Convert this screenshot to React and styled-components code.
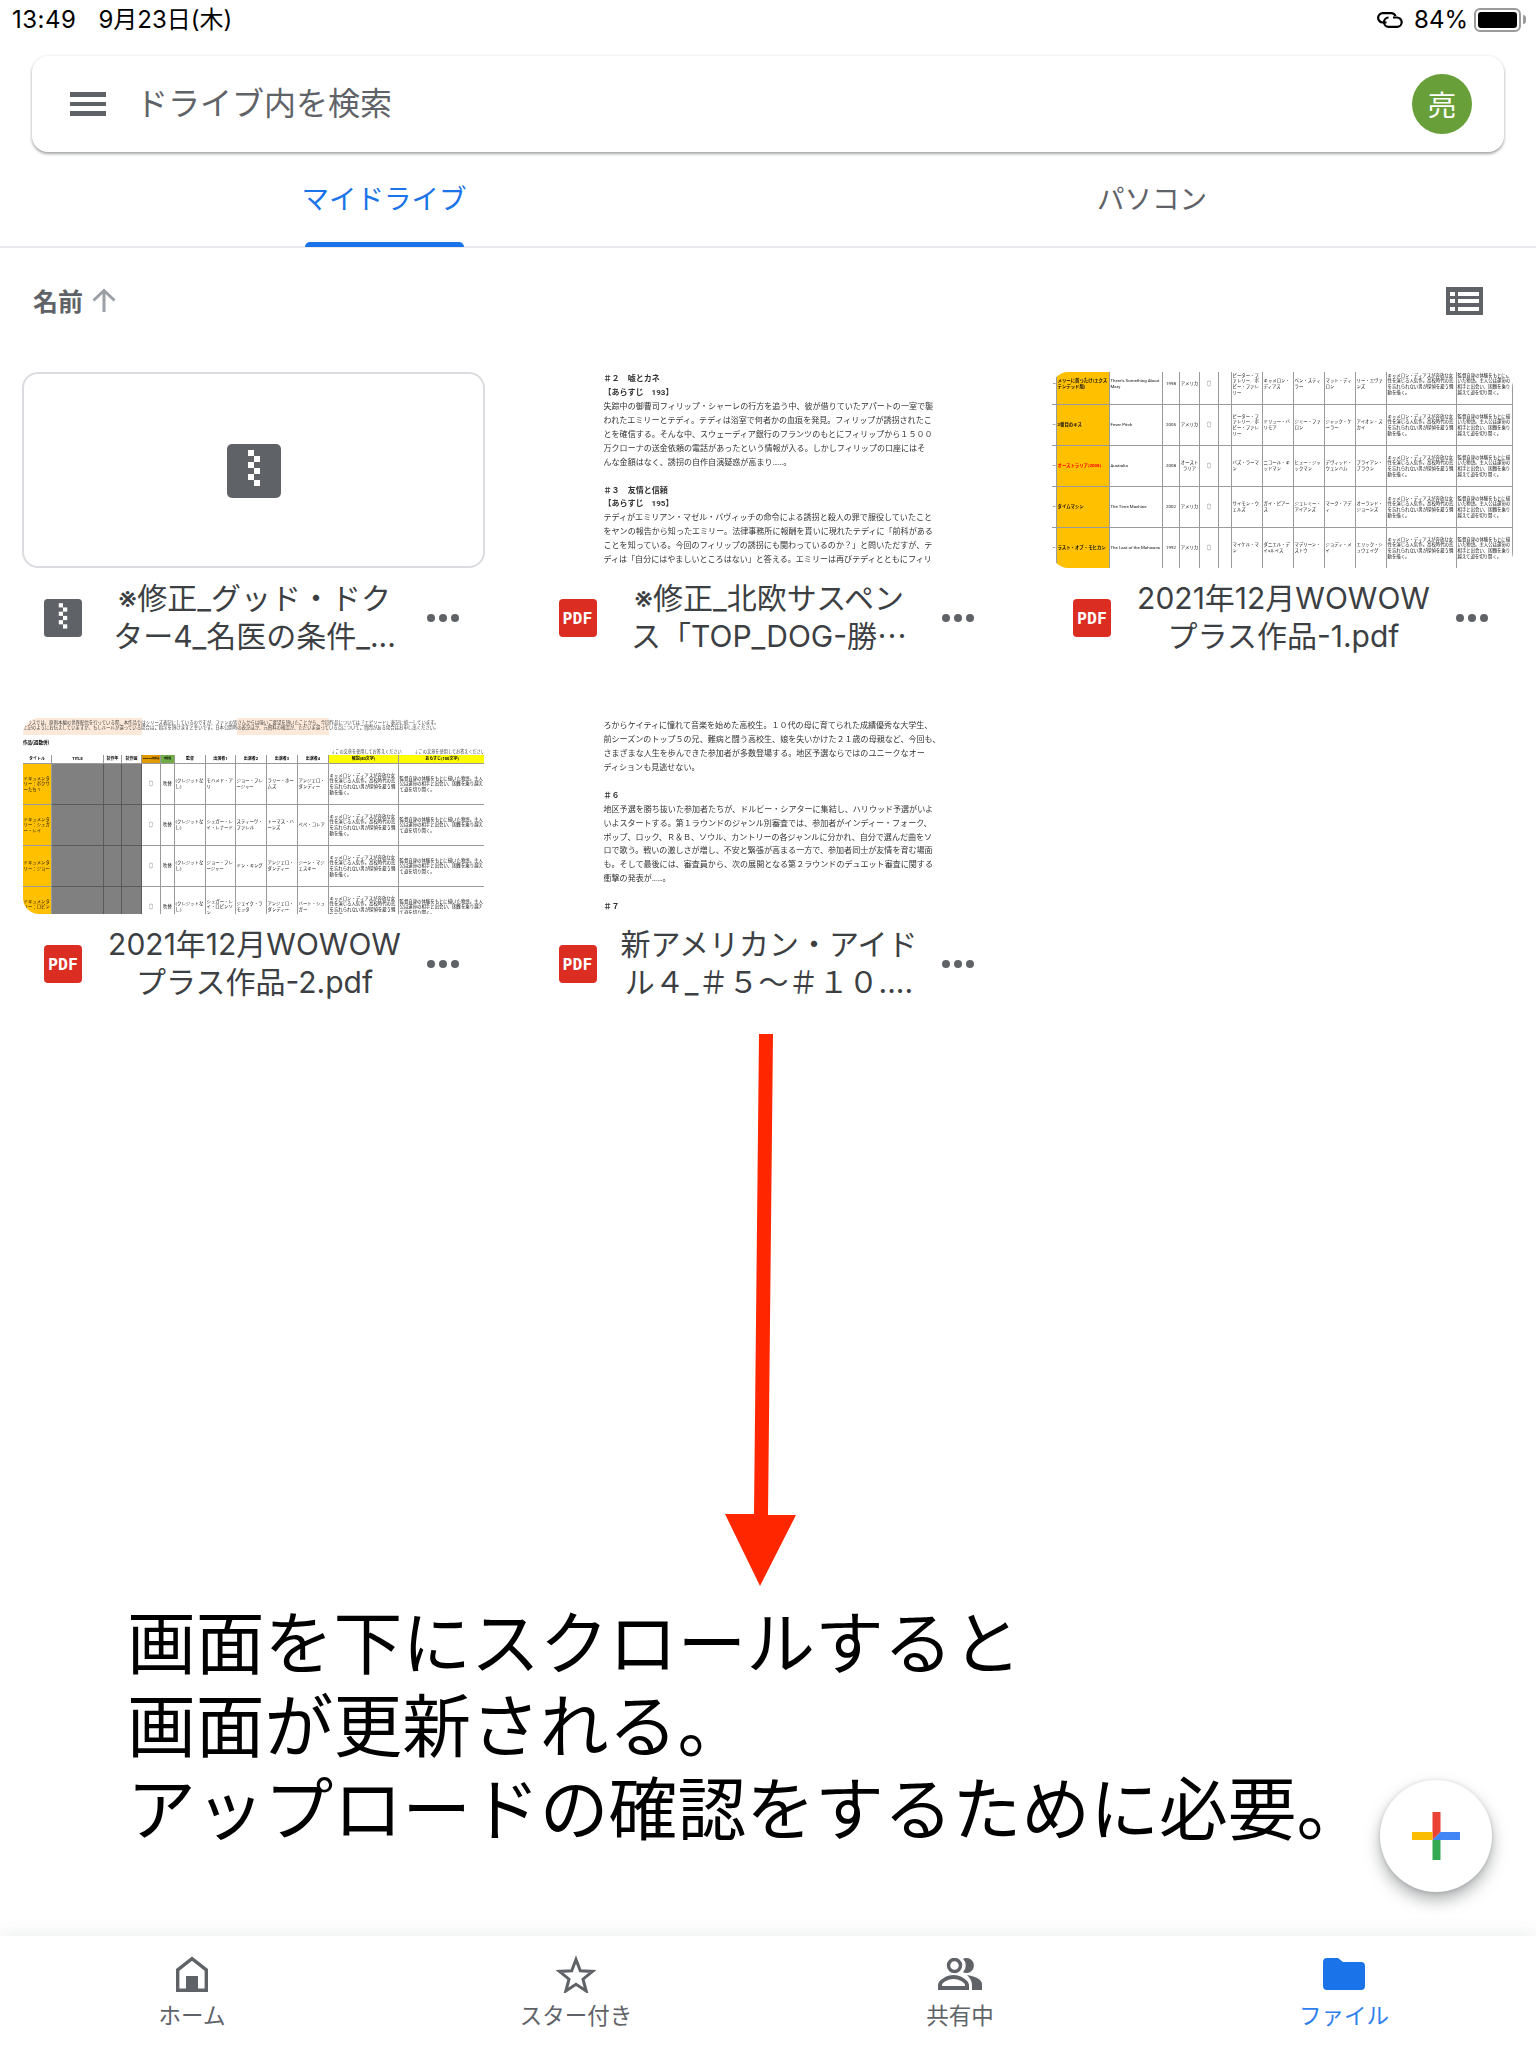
import React from "react";
import styled, { createGlobalStyle } from "styled-components";

const FONT = `Roboto, "Noto Sans CJK JP", sans-serif`;
const GREY = "#5f6368";
const BLUE = "#1a73e8";

const GlobalStyle = createGlobalStyle`
  html, body {
    margin: 0;
    padding: 0;
    background: #fff;
  }
  * {
    box-sizing: border-box;
  }
`;

const Page = styled.div`
  position: relative;
  width: 1536px;
  height: 2048px;
  display: flex;
  flex-direction: column;
  overflow: hidden;
  background: #fff;
  font-family: ${FONT};
`;

/* status bar */
const StatusBar = styled.div`
  height: 40px;
  display: flex;
  align-items: center;
  justify-content: space-between;
  padding: 0 15px 0 12px;
  font-family: Inter, "Noto Sans CJK JP", sans-serif;
  font-size: 24px;
  line-height: 28px;
  color: #000;
`;

const StatusLeft = styled.div`
  display: flex;
  align-items: baseline;
  gap: 22px;
`;

const StatusTime = styled.span`
  letter-spacing: 0.5px;
`;

const StatusRight = styled.div`
  display: flex;
  align-items: center;
`;

const BatteryLevel = styled.span`
  margin: 0 6px 0 11px;
`;

const Battery = styled.div`
  position: relative;
  width: 47px;
  height: 24px;
  border: 2px solid #9b9b9b;
  border-radius: 6px;
  padding: 2px;

  &::before {
    content: "";
    display: block;
    width: 39px;
    height: 16px;
    background: #000;
    border-radius: 3px;
  }

  &::after {
    content: "";
    position: absolute;
    right: -7px;
    top: 5px;
    width: 3px;
    height: 9px;
    background: #9b9b9b;
    border-radius: 0 3px 3px 0;
  }
`;

/* search */
const SearchBar = styled.div`
  height: 96px;
  margin: 16px 32px 0 32px;
  padding: 0 32px 0 38px;
  display: flex;
  align-items: center;
  background: #fff;
  border-radius: 16px;
  box-shadow: 0 2px 3px rgba(60, 64, 67, 0.45), 0 0 3px rgba(60, 64, 67, 0.1);
`;

const Hamburger = styled.div`
  width: 36px;
  height: 24px;
  border-top: 5px solid ${GREY};
  border-bottom: 5px solid ${GREY};
  position: relative;

  &::after {
    content: "";
    position: absolute;
    left: 0;
    right: 0;
    top: 5px;
    height: 4px;
    background: ${GREY};
  }
`;

const SearchText = styled.div`
  flex: 1;
  margin-left: 30px;
  padding-bottom: 7px;
  font-size: 32px;
  color: ${GREY};
`;

const Avatar = styled.div`
  width: 60px;
  height: 60px;
  border-radius: 50%;
  background: #689f38;
  color: #fff;
  font-size: 28px;
  display: flex;
  align-items: center;
  justify-content: center;
`;

/* tabs */
const Tabs = styled.div`
  height: 96px;
  display: flex;
  border-bottom: 2px solid #e8eaed;
`;

const Tab = styled.div`
  position: relative;
  flex: 1;
  display: flex;
  align-items: center;
  justify-content: center;
  padding-bottom: 5px;
  font-size: 27.5px;
  color: ${({ $active }) => ($active ? BLUE : GREY)};

  ${({ $active }) =>
    $active &&
    `
    &::after {
      content: "";
      position: absolute;
      left: 305px;
      width: 159px;
      bottom: -1px;
      height: 5px;
      background: ${BLUE};
      border-radius: 5px 5px 0 0;
    }
  `}
`;

/* sort row */
const SortRow = styled.div`
  height: 106px;
  flex-shrink: 0;
  padding: 0 53px 0 33px;
  display: flex;
  align-items: center;
  justify-content: space-between;
`;

const SortLabel = styled.div`
  display: flex;
  align-items: center;
  gap: 9px;
  padding-bottom: 2px;
  font-size: 25px;
  font-weight: 700;
  color: ${GREY};
`;

/* file grid */
const FileGrid = styled.div`
  margin-top: 18px;
  padding-left: 23px;
  display: grid;
  grid-template-columns: repeat(3, 461px);
  column-gap: 53.5px;
  row-gap: 62px;
`;

const Card = styled.div`
  display: flex;
  flex-direction: column;
`;

const Thumb = styled.div`
  height: 196px;
  border-radius: 16px;
  overflow: hidden;
  background: #fff;
`;

const ZipThumb = styled(Thumb)`
  margin: 0 -1px;
  padding-top: 1px;
  border: 2px solid #dadce0;
  display: flex;
  align-items: center;
  justify-content: center;
`;

const DocPage = styled(Thumb)`
  padding: ${({ $top }) => $top}px 0 0 66px;
  font-size: 8.05px;
  line-height: 13.95px;
  color: #333;
  filter: blur(0.65px);
  white-space: nowrap;
`;

const DocLine = styled.div`
  width: 340px;
  height: 13.95px;
  font-weight: ${({ $head }) => ($head ? 700 : 400)};
`;

const SheetWrap = styled(Thumb)`
  filter: blur(0.45px);
  font-size: 4.4px;
  line-height: 5.6px;
  color: #111;
`;

const Notes = styled.div`
  height: 17px;
  padding-top: 2px;
  font-size: 4.4px;
  line-height: 5.4px;
  color: #444;
  white-space: nowrap;
  background: linear-gradient(
    to right,
    #fde9d9 0 119px,
    transparent 119px 214px,
    #fde9d9 214px 306px,
    transparent 306px
  );
`;

const SheetHeading = styled.div`
  height: 14px;
  padding-top: 5px;
  font-size: 4.6px;
  font-weight: 700;
  color: #000;
`;

const SheetHint = styled.div`
  height: 6px;
  padding-left: 308px;
  font-size: 4.2px;
  line-height: 6px;
  color: #444;
  white-space: nowrap;
`;

const SheetGrid = styled.div`
  display: grid;
  grid-template-columns: ${({ $cols }) => $cols};
  grid-template-rows: ${({ $head }) => ($head ? `${$head}px` : "none")};
  grid-auto-rows: 41px;
  margin-top: ${({ $shift }) => $shift || 0}px;
`;

const SheetCell = styled.div`
  display: flex;
  align-items: center;
  justify-content: ${({ $center }) => ($center ? "center" : "flex-start")};
  text-align: ${({ $center }) => ($center ? "center" : "left")};
  padding: 0 0.5px;
  overflow: hidden;
  border-right: 1.5px solid ${({ $line }) => $line || "#9a9a9a"};
  border-bottom: 1.5px solid ${({ $line }) => $line || "#9a9a9a"};
  background: ${({ $bg }) => $bg || "transparent"};
  color: ${({ $color }) => $color || "#111"};
  font-weight: ${({ $bold }) => ($bold ? 700 : 400)};
  font-size: ${({ $size }) => ($size ? `${$size}px` : "inherit")};
`;

const CardRow = styled.div`
  margin-top: 12px;
  height: 76px;
  display: flex;
  align-items: center;
  padding-left: 21px;
`;

const FileName = styled.div`
  width: 345px;
  padding-bottom: 2px;
  font-family: Inter, "Noto Sans CJK JP", sans-serif;
  font-size: 30px;
  line-height: 38px;
  color: #3c4043;
  text-align: center;
  white-space: nowrap;
`;

const PdfIcon = styled.div`
  width: 38px;
  height: 38px;
  flex-shrink: 0;
  border-radius: 4px;
  background: #dc2d22;
  color: #fff;
  font-family: "DejaVu Sans Mono", monospace;
  font-size: 16.5px;
  font-weight: 700;
  display: flex;
  align-items: center;
  justify-content: center;
`;

const Dots = styled.div`
  display: flex;
  gap: 4px;

  span {
    width: 8px;
    height: 8px;
    border-radius: 50%;
    background: ${GREY};
  }
`;

/* annotation over the page */
const Arrow = styled.svg`
  position: absolute;
  left: 720px;
  top: 1030px;
`;

const Annotation = styled.div`
  position: absolute;
  left: 127px;
  top: 1604px;
  font-size: 68.8px;
  line-height: 83px;
  color: #000;
  white-space: nowrap;
`;

const Fab = styled.div`
  position: absolute;
  left: 1380px;
  top: 1780px;
  width: 112px;
  height: 112px;
  border-radius: 50%;
  background: #fff;
  display: flex;
  align-items: center;
  justify-content: center;
  box-shadow: 0 8px 16px rgba(60, 64, 67, 0.4), 0 1px 4px rgba(60, 64, 67, 0.2);
`;

/* bottom nav */
const BottomNav = styled.div`
  margin-top: auto;
  height: 112px;
  display: grid;
  grid-template-columns: repeat(4, 1fr);
  background: #fff;
  box-shadow: 0 -6px 14px rgba(60, 64, 67, 0.07);
  position: relative;
`;

const NavItem = styled.div`
  display: flex;
  flex-direction: column;
  align-items: center;
  padding-top: 18px;
  font-size: 22.5px;
  color: ${({ $active }) => ($active ? "#2f80ed" : GREY)};
`;

const NavIcon = styled.div`
  height: 40px;
  display: flex;
  align-items: center;
  justify-content: center;
`;

const NavLabel = styled.div`
  margin-top: 7px;
  line-height: 30px;
`;

const ZipIcon = ({ size }) => (
  <svg width={size} height={size} viewBox="0 0 54 54">
    <rect width="54" height="54" rx="5" fill={GREY} />
    {[0, 1, 2, 3, 4, 5].map((i) => (
      <rect key={i} x={i % 2 ? 27 : 21} y={6 + i * 6} width="6" height="6" fill="#fff" />
    ))}
  </svg>
);

const LinkIcon = () => (
  <svg width="26" height="16" viewBox="0 0 26 16" fill="none" stroke="#000" strokeWidth="2.200">
    <path d="M9.500 10.500H5.800a4.700 4.700 0 0 1 0-9.400h8.400a4.700 4.700 0 0 1 4.300 3" />
    <path d="M16 5.500h4a4.700 4.700 0 0 1 0 9.400h-8.400a4.700 4.700 0 0 1-4.600-4.700 4.700 4.700 0 0 1 4.600-4.700" />
  </svg>
);

const SortArrow = () => (
  <svg width="24" height="24" viewBox="0 0 24 24" fill="none" stroke="#9aa0a6" strokeWidth="3">
    <path d="M12 24V2.500M1.500 12.500 12 2.500l10.500 10" />
  </svg>
);

const ListIcon = () => (
  <svg width="37" height="28" viewBox="0 0 37 28">
    <rect width="37" height="28" fill={GREY} />
    <g fill="#fff">
      <rect x="4" y="5" width="5" height="4" />
      <rect x="4" y="12" width="5" height="4" />
      <rect x="4" y="20" width="5" height="4" />
      <rect x="12" y="5" width="21" height="4" />
      <rect x="12" y="12" width="21" height="4" />
      <rect x="12" y="20" width="21" height="4" />
    </g>
  </svg>
);

const HomeIcon = () => (
  <svg width="32" height="36" viewBox="0 0 32 36">
    <path
      fill="none"
      stroke={GREY}
      strokeWidth="3.400"
      d="M1.700 34.300V13.800L16 2.600l14.300 11.200v20.500z"
    />
    <rect x="10" y="20" width="12" height="14" fill={GREY} />
  </svg>
);

const StarIcon = () => (
  <svg width="40" height="38" viewBox="0 0 40 38">
    <path
      fill="none"
      stroke={GREY}
      strokeWidth="3"
      d="M20 4.500l4.300 11.300 12.200.6-9.500 7.800 3.200 11.800L20 29.300 9.800 36l3.200-11.800-9.500-7.800 12.200-.6z"
    />
  </svg>
);

const SharedIcon = () => (
  <svg width="44" height="32" viewBox="0 0 44 32">
    <circle cx="16.500" cy="7.500" r="6" fill="none" stroke={GREY} strokeWidth="3.500" />
    <path d="M25 .8A7.500 7.500 0 1 1 25 14.200 9.500 9.500 0 0 0 25 .8z" fill={GREY} />
    <path
      fillRule="evenodd"
      fill={GREY}
      d="M0 32v-5c0-5 9-10 15.500-10S31 22 31 27v5zM4 28h23v-1c0-2.500-6.500-6-11.500-6S4 24.500 4 27z"
    />
    <path d="M29 17c7 1 15 4 15 9v6H34v-5c0-4-2-7-5-10z" fill={GREY} />
  </svg>
);

const FolderIcon = () => (
  <svg width="42" height="32" viewBox="0 0 42 32">
    <path
      fill={BLUE}
      d="M4 0h11l5 4h18a4 4 0 0 1 4 4v20a4 4 0 0 1-4 4H4a4 4 0 0 1-4-4V4a4 4 0 0 1 4-4z"
    />
  </svg>
);

const PlusIcon = () => (
  <svg width="48" height="48" viewBox="0 0 48 48">
    <polygon fill="#ea4335" points="20.500,0 28.500,0 28.500,20 20.500,28" />
    <polygon fill="#4285f4" points="28.500,20 48,20 48,28 20.500,28" />
    <polygon fill="#fbbc04" points="0,20 20.500,20 20.500,28 0,28" />
    <polygon fill="#34a853" points="20.500,28 28.500,28 28.500,48 20.500,48" />
  </svg>
);

const DOC_ONE = [
  "＃２　嘘とカネ",
  "【あらすじ　193】",
  "失踪中の御曹司フィリップ・シャーレの行方を追う中、彼が借りていたアパートの一室で襲",
  "われたエミリーとテディ。テディは浴室で何者かの血痕を発見。フィリップが誘拐されたこ",
  "とを確信する。そんな中、スウェーディア銀行のフランツのもとにフィリップから１５００",
  "万クローナの送金依頼の電話があったという情報が入る。しかしフィリップの口座にはそ",
  "んな金額はなく、誘拐の自作自演疑惑が高まり……。",
  "",
  "＃３　友情と信頼",
  "【あらすじ　195】",
  "テディがエミリアン・マゼル・バヴィッチの命令による誘拐と殺人の罪で服役していたこと",
  "をヤンの報告から知ったエミリー。法律事務所に報酬を貰いに現れたテディに「前科がある",
  "ことを知っている。今回のフィリップの誘拐にも関わっているのか？」と問いただすが、テ",
  "ディは「自分にはやましいところはない」と答える。エミリーは再びテディとともにフィリ",
];

const DOC_TWO = [
  "ろからケイティに憧れて音楽を始めた高校生。１０代の母に育てられた成績優秀な大学生、",
  "前シーズンのトップ５の兄、難病と闘う高校生、娘を失いかけた２１歳の母親など、今回も、",
  "さまざまな人生を歩んできた参加者が多数登場する。地区予選ならではのユニークなオー",
  "ディションも見逃せない。",
  "",
  "＃６",
  "地区予選を勝ち抜いた参加者たちが、ドルビー・シアターに集結し、ハリウッド予選がいよ",
  "いよスタートする。第１ラウンドのジャンル別審査では、参加者がインディー・フォーク、",
  "ポップ、ロック、Ｒ＆Ｂ、ソウル、カントリーの各ジャンルに分かれ、自分で選んだ曲をソ",
  "ロで歌う。戦いの激しさが増し、不安と緊張が高まる一方で、参加者同士が友情を育む場面",
  "も。そして最後には、審査員から、次の展開となる第２ラウンドのデュエット審査に関する",
  "衝撃の発表が……。",
  "",
  "＃７",
];

const SYNOPSIS =
  "キャメロン・ディアスが奔放な女性を演じる人気作。高校時代の恋を忘れられない男が探偵を雇う騒動を描く。";
const STORY = "監督自身の体験をもとに描いた物語。主人公は運命の相手と出会い、困難を乗り越えて道を切り開く。";

const SHEET_ONE = [
  ["400", "メリーに首ったけ(エクステンデッド版)", "There's Something About Mary", "1998", "アメリカ", "○", "", "ピーター・ファレリー／ボビー・ファレリー", "キャメロン・ディアス", "ベン・スティラー", "マット・ディロン", "リー・エヴァンズ"],
  ["404", "2番目のキス", "Fever Pitch", "2005", "アメリカ", "○", "", "ピーター・ファレリー／ボビー・ファレリー", "ドリュー・バリモア", "ジミー・ファロン", "ジャック・ケーラー", "アイオン・スカイ"],
  ["405", "オーストラリア(2008)", "Australia", "2008", "オースト ラリア", "○", "", "バズ・ラーマン", "ニコール・キッドマン", "ヒュー・ジャックマン", "デヴィッド・ウェンハム", "ブライアン・ブラウン"],
  ["406", "タイムマシン", "The Time Machine", "2002", "アメリカ", "○", "", "サイモン・ウェルズ", "ガイ・ピアース", "ジェレミー・アイアンズ", "マーク・アディ", "オーランド・ジョーンズ"],
  ["407", "ラスト・オブ・モヒカン", "The Last of the Mohicans", "1992", "アメリカ", "○", "", "マイケル・マン", "ダニエル・デイ=ルイス", "マデリーン・ストウ", "ジョディ・メイ", "エリック・シュウェイグ"],
];

const SHEET_TWO_HEAD = ["タイトル", "TITLE", "製作年", "製作国", "WOWOW初放送", "吹替版", "監督", "出演者1", "出演者2", "出演者3", "出演者4", "解説(80文字)", "あらすじ(100文字)"];

const SHEET_TWO = [
  ["ドキュメンタリー：ボクサーたち 1", "モハメド・アリ", "ジョー・フレージャー", "ラリー・ホームズ", "アンジェロ・ダンディー"],
  ["ドキュメンタリー：シュガー・レイ", "シュガー・レイ・レナード", "スティーヴ・ファレル", "トーマス・ハーンズ", "ペペ・コレア"],
  ["ドキュメンタリー：ジョー", "ジョー・フレージャー", "ドン・キング", "アンジェロ・ダンディー", "ジーン・マジェスキー"],
  ["ドキュメンタリー：ロビンソン", "シュガー・レイ・ロビンソン", "ジェイク・ラモッタ", "アンジェロ・ダンディー", "バート・シュガー"],
];

const FileSheetOne = () => (
  <SheetWrap>
    <SheetGrid
      $cols="5px 53px 53px 17px 20px 19px 13px 31px 31px 31px 31px 31px 70px 56px"
      $shift={-8}
    >
      {SHEET_ONE.map((row, r) =>
        [...row, SYNOPSIS, STORY].map((text, c) => (
          <SheetCell
            key={`${r}-${c}`}
            $bg={c === 1 ? "#ffc000" : undefined}
            $color={c === 1 && r === 2 ? "#ff0000" : undefined}
            $bold={c === 1}
            $center={c >= 3 && c <= 5}
            $size={c === 0 ? 1.8 : undefined}
          >
            {text}
          </SheetCell>
        ))
      )}
    </SheetGrid>
  </SheetWrap>
);

const FileSheetTwo = () => (
  <SheetWrap>
    <Notes>
      プラスでは、原則本編の世界配信を行っている際、本作品ではシリーズ表記にしているのですが、ファンの皆さんからは強いご要望を頂いたことから、今回作品については「エピソード」表記に統一しています。
      <br />
      上記のようにお伝えしていますが、もしルールが違っている場合はご指示を頂けますと幸いです。日本公開時の表記ほか、元資料の確認が、ただいま違っている点についてご質問がある場合はお申し出ください。
    </Notes>
    <SheetHeading>作品(週数併)</SheetHeading>
    <SheetHint>↓この文章を使用してお答えください　　　↓この文章を使用してお答えください</SheetHint>
    <SheetGrid $cols="29px 52px 18px 20px 19px 14px 31px 30px 31px 31px 31px 70px 87px" $head={9}>
      {SHEET_TWO_HEAD.map((text, c) => (
        <SheetCell
          key={text}
          $center
          $bold
          $size={c === 4 || c === 5 ? 2.4 : 4}
          $bg={c === 4 ? "#e09a00" : c === 5 ? "#70ad47" : c >= 11 ? "#ffff00" : undefined}
          $color="#000"
        >
          {text}
        </SheetCell>
      ))}
      {SHEET_TWO.map((row, r) => (
        <React.Fragment key={r}>
          <SheetCell $bg="#ffc000">{row[0]}</SheetCell>
          <SheetCell $bg="#808080" $line="#5a5a5a" />
          <SheetCell $bg="#808080" $line="#5a5a5a" />
          <SheetCell $bg="#808080" $line="#5a5a5a" />
          <SheetCell $center>○</SheetCell>
          <SheetCell $center>吹替</SheetCell>
          <SheetCell>(クレジットなし)</SheetCell>
          {row.slice(1).map((text) => (
            <SheetCell key={text}>{text}</SheetCell>
          ))}
          <SheetCell>{SYNOPSIS}</SheetCell>
          <SheetCell>{STORY}</SheetCell>
        </React.Fragment>
      ))}
    </SheetGrid>
  </SheetWrap>
);

const FileDoc = ({ lines, top }) => (
  <DocPage $top={top}>
    {lines.map((line, i) => (
      <DocLine key={i} $head={line.startsWith("＃") || line.startsWith("【")}>
        {line}
      </DocLine>
    ))}
  </DocPage>
);

const FileCard = ({ thumb, icon, lines }) => (
  <Card>
    {thumb}
    <CardRow>
      {icon}
      <FileName>
        {lines[0]}
        <br />
        {lines[1]}
      </FileName>
      <Dots>
        <span />
        <span />
        <span />
      </Dots>
    </CardRow>
  </Card>
);

const App = () => (
  <Page>
    <GlobalStyle />
    <StatusBar>
      <StatusLeft>
        <StatusTime>13:49</StatusTime>
        <span>9月23日(木)</span>
      </StatusLeft>
      <StatusRight>
        <LinkIcon />
        <BatteryLevel>84%</BatteryLevel>
        <Battery />
      </StatusRight>
    </StatusBar>

    <SearchBar>
      <Hamburger />
      <SearchText>ドライブ内を検索</SearchText>
      <Avatar>亮</Avatar>
    </SearchBar>

    <Tabs>
      <Tab $active>マイドライブ</Tab>
      <Tab>パソコン</Tab>
    </Tabs>

    <SortRow>
      <SortLabel>
        名前
        <SortArrow />
      </SortLabel>
      <ListIcon />
    </SortRow>

    <FileGrid>
      <FileCard
        thumb={
          <ZipThumb>
            <ZipIcon size={54} />
          </ZipThumb>
        }
        icon={<ZipIcon size={38} />}
        lines={["※修正_グッド・ドク", "ター4_名医の条件_..."]}
      />
      <FileCard
        thumb={<FileDoc lines={DOC_ONE} top={0} />}
        icon={<PdfIcon>PDF</PdfIcon>}
        lines={["※修正_北欧サスペン", "ス「TOP_DOG-勝⋯"]}
      />
      <FileCard
        thumb={<FileSheetOne />}
        icon={<PdfIcon>PDF</PdfIcon>}
        lines={["2021年12月WOWOW", "プラス作品-1.pdf"]}
      />
      <FileCard
        thumb={<FileSheetTwo />}
        icon={<PdfIcon>PDF</PdfIcon>}
        lines={["2021年12月WOWOW", "プラス作品-2.pdf"]}
      />
      <FileCard
        thumb={<FileDoc lines={DOC_TWO} top={1} />}
        icon={<PdfIcon>PDF</PdfIcon>}
        lines={["新アメリカン・アイド", "ル４_＃５～＃１０...."]}
      />
    </FileGrid>

    <BottomNav>
      <NavItem>
        <NavIcon>
          <HomeIcon />
        </NavIcon>
        <NavLabel>ホーム</NavLabel>
      </NavItem>
      <NavItem>
        <NavIcon>
          <StarIcon />
        </NavIcon>
        <NavLabel>スター付き</NavLabel>
      </NavItem>
      <NavItem>
        <NavIcon>
          <SharedIcon />
        </NavIcon>
        <NavLabel>共有中</NavLabel>
      </NavItem>
      <NavItem $active>
        <NavIcon>
          <FolderIcon />
        </NavIcon>
        <NavLabel>ファイル</NavLabel>
      </NavItem>
    </BottomNav>

    <Arrow width="80" height="560" viewBox="0 0 80 560">
      <polygon fill="#ff2600" points="39,4 53,4 48,485 76,485 40,556 5,484 34,484" />
    </Arrow>

    <Annotation>
      画面を下にスクロールすると
      <br />
      画面が更新される。
      <br />
      アップロードの確認をするために必要。
    </Annotation>

    <Fab>
      <PlusIcon />
    </Fab>
  </Page>
);

export default App;
